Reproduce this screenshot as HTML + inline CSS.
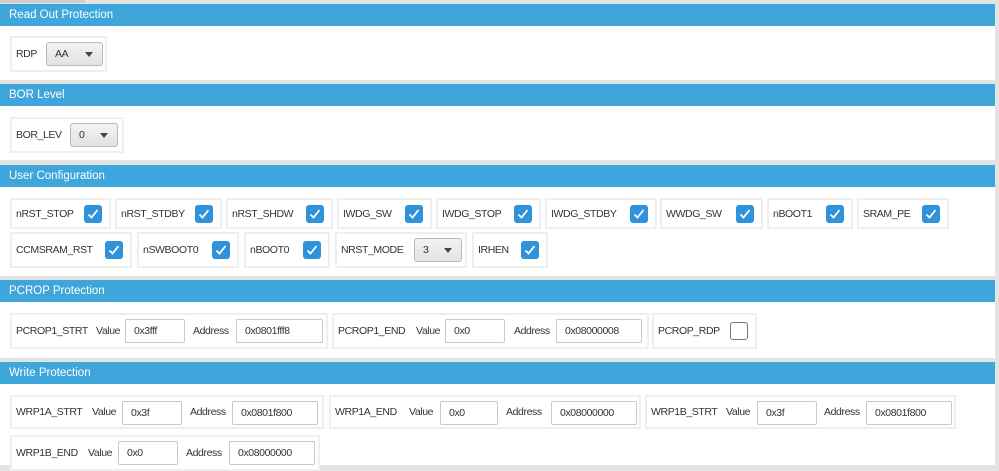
<!DOCTYPE html>
<html><head><meta charset="utf-8"><style>
*{box-sizing:border-box;margin:0;padding:0}
body{width:999px;height:465px;overflow:hidden;background:#e3e3e3;font-family:"Liberation Sans",sans-serif;font-size:10.5px;letter-spacing:-0.4px;color:#333;position:relative}
.sec{position:absolute;left:0;width:995px;background:#fff}
.hd{position:absolute;left:0;width:995px;height:22px;background:#3ea6da;color:#fff;font-size:11.5px;letter-spacing:0;line-height:22px;padding-left:9px}
.b{position:absolute;border:2px solid #efefef;background:#fff;display:flex;align-items:center;justify-content:space-between;padding:0 7px 0 4px;white-space:nowrap}
.cb{width:18px;height:18px;background:#2f93db;border-radius:3px;position:relative;flex:none}
.cb svg{position:absolute;left:2px;top:2px}
.ecb{width:18px;height:18px;border:1px solid #777;border-radius:3px;background:#fff}
.sel{position:absolute;border:1px solid #b9b9b9;border-radius:3px;background:linear-gradient(#f3f3f3,#e2e2e2);height:24px;line-height:22px;padding-left:8px}
.sel:after{content:"";position:absolute;right:9px;top:9px;border-left:4px solid transparent;border-right:4px solid transparent;border-top:5px solid #444}
.t{position:absolute;line-height:14px}
.in{position:absolute;border:1px solid #c9c9c9;border-radius:2px;background:#fff;height:24px;line-height:22px;padding-left:8px}
</style></head><body>
<div style="position:absolute;left:0;top:0;width:85px;height:3px;background:#cfcfcf"></div>
<div class="sec" style="top:26px;height:54px"></div>
<div class="sec" style="top:106px;height:54px"></div>
<div class="sec" style="top:187px;height:89px"></div>
<div class="sec" style="top:302px;height:56px"></div>
<div class="sec" style="top:384px;height:81px"></div>
<div class="hd" style="top:4px">Read Out Protection</div>
<div class="hd" style="top:84px">BOR Level</div>
<div class="hd" style="top:165px">User Configuration</div>
<div class="hd" style="top:280px">PCROP Protection</div>
<div class="hd" style="top:362px">Write Protection</div>

<div class="b" style="left:10px;top:36px;width:97px;height:36px"><span>RDP</span></div>
<div class="sel" style="left:46px;top:42px;width:57px">AA</div>
<div class="b" style="left:10px;top:117px;width:114px;height:36px"><span>BOR_LEV</span></div>
<div class="sel" style="left:70px;top:123px;width:48px">0</div>

<svg width="0" height="0" style="position:absolute"><defs><symbol id="ck" viewBox="0 0 14 14"><path d="M2.5 7.5 L5.5 10.5 L11.5 3" fill="none" stroke="#fff" stroke-width="1.8"/></symbol></defs></svg>

<div class="b" style="left:10px;top:198px;width:101px;height:31px"><span>nRST_STOP</span><span class="cb"><svg width="14" height="14"><use href="#ck"/></svg></span></div>
<div class="b" style="left:115px;top:198px;width:107px;height:31px"><span>nRST_STDBY</span><span class="cb"><svg width="14" height="14"><use href="#ck"/></svg></span></div>
<div class="b" style="left:226px;top:198px;width:107px;height:31px"><span>nRST_SHDW</span><span class="cb"><svg width="14" height="14"><use href="#ck"/></svg></span></div>
<div class="b" style="left:337px;top:198px;width:95px;height:31px"><span>IWDG_SW</span><span class="cb"><svg width="14" height="14"><use href="#ck"/></svg></span></div>
<div class="b" style="left:436px;top:198px;width:105px;height:31px"><span>IWDG_STOP</span><span class="cb"><svg width="14" height="14"><use href="#ck"/></svg></span></div>
<div class="b" style="left:545px;top:198px;width:112px;height:31px"><span>IWDG_STDBY</span><span class="cb"><svg width="14" height="14"><use href="#ck"/></svg></span></div>
<div class="b" style="left:660px;top:198px;width:103px;height:31px"><span>WWDG_SW</span><span class="cb"><svg width="14" height="14"><use href="#ck"/></svg></span></div>
<div class="b" style="left:767px;top:198px;width:86px;height:31px"><span>nBOOT1</span><span class="cb"><svg width="14" height="14"><use href="#ck"/></svg></span></div>
<div class="b" style="left:857px;top:198px;width:92px;height:31px"><span>SRAM_PE</span><span class="cb"><svg width="14" height="14"><use href="#ck"/></svg></span></div>

<div class="b" style="left:10px;top:232px;width:122px;height:36px"><span>CCMSRAM_RST</span><span class="cb"><svg width="14" height="14"><use href="#ck"/></svg></span></div>
<div class="b" style="left:137px;top:232px;width:102px;height:36px"><span>nSWBOOT0</span><span class="cb"><svg width="14" height="14"><use href="#ck"/></svg></span></div>
<div class="b" style="left:244px;top:232px;width:86px;height:36px"><span>nBOOT0</span><span class="cb"><svg width="14" height="14"><use href="#ck"/></svg></span></div>
<div class="b" style="left:335px;top:232px;width:132px;height:36px"><span>NRST_MODE</span></div>
<div class="sel" style="left:414px;top:238px;width:48px">3</div>
<div class="b" style="left:472px;top:232px;width:76px;height:36px"><span>IRHEN</span><span class="cb"><svg width="14" height="14"><use href="#ck"/></svg></span></div>

<div class="b" style="left:10px;top:313px;width:318px;height:36px"><span>PCROP1_STRT</span></div>
<span class="t" style="left:96px;top:324px">Value</span><div class="in" style="left:125px;top:319px;width:60px">0x3fff</div>
<span class="t" style="left:193px;top:324px">Address</span><div class="in" style="left:236px;top:319px;width:87px">0x0801fff8</div>
<div class="b" style="left:332px;top:313px;width:317px;height:36px"><span>PCROP1_END</span></div>
<span class="t" style="left:416px;top:324px">Value</span><div class="in" style="left:445px;top:319px;width:60px">0x0</div>
<span class="t" style="left:514px;top:324px">Address</span><div class="in" style="left:556px;top:319px;width:86px">0x08000008</div>
<div class="b" style="left:652px;top:313px;width:105px;height:36px"><span>PCROP_RDP</span><span class="ecb"></span></div>

<div class="b" style="left:10px;top:395px;width:314px;height:34px"><span>WRP1A_STRT</span></div>
<span class="t" style="left:92px;top:405px">Value</span><div class="in" style="left:122px;top:401px;width:60px">0x3f</div>
<span class="t" style="left:190px;top:405px">Address</span><div class="in" style="left:232px;top:401px;width:86px">0x0801f800</div>
<div class="b" style="left:329px;top:395px;width:312px;height:34px"><span>WRP1A_END</span></div>
<span class="t" style="left:409px;top:405px">Value</span><div class="in" style="left:440px;top:401px;width:58px">0x0</div>
<span class="t" style="left:506px;top:405px">Address</span><div class="in" style="left:551px;top:401px;width:86px">0x08000000</div>
<div class="b" style="left:645px;top:395px;width:311px;height:34px"><span>WRP1B_STRT</span></div>
<span class="t" style="left:726px;top:405px">Value</span><div class="in" style="left:757px;top:401px;width:60px">0x3f</div>
<span class="t" style="left:824px;top:405px">Address</span><div class="in" style="left:866px;top:401px;width:86px">0x0801f800</div>
<div class="b" style="left:10px;top:435px;width:310px;height:36px"><span>WRP1B_END</span></div>
<span class="t" style="left:88px;top:446px">Value</span><div class="in" style="left:118px;top:441px;width:60px">0x0</div>
<span class="t" style="left:186px;top:446px">Address</span><div class="in" style="left:229px;top:441px;width:86px">0x08000000</div>
</body></html>
